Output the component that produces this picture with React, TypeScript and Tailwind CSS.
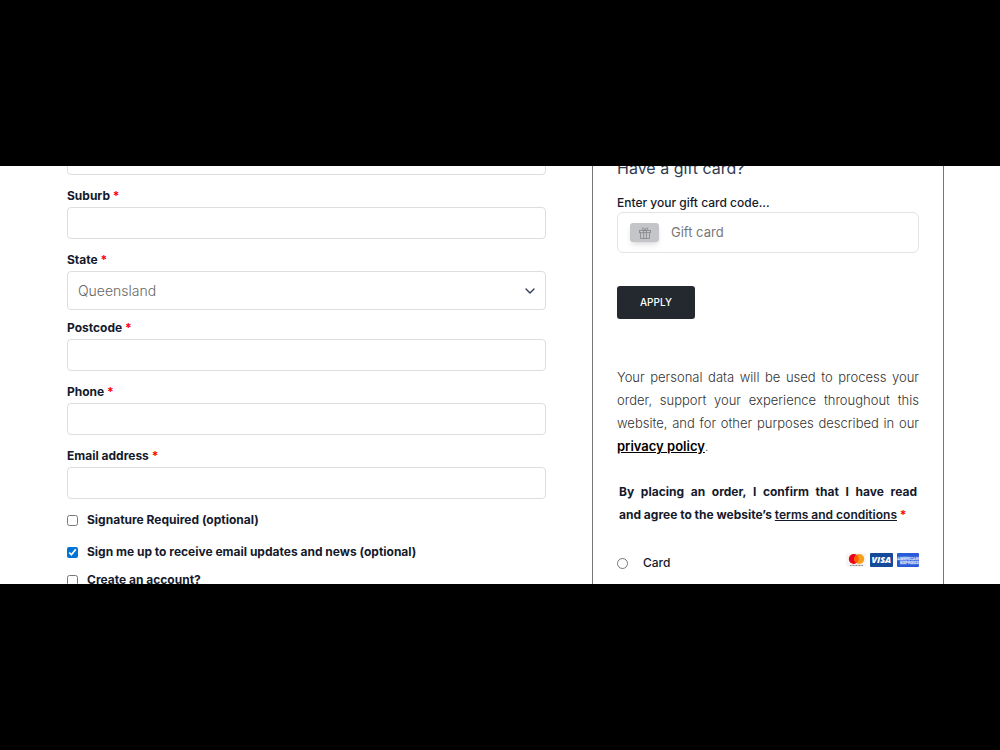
import { useState } from 'react';
import { ChevronDown } from 'lucide-react';

interface TextFieldProps {
  id: string;
  label: string;
  type?: string;
}

const inputClass =
  'block w-full h-8 px-2.5 text-sm bg-white border border-[#dddddd] rounded outline-none focus:border-[#999999]';

function RequiredMark() {
  return <span className="text-[#ff0000]">*</span>;
}

function TextField({ id, label, type = 'text' }: TextFieldProps) {
  return (
    <div className="pb-[11px]">
      <label htmlFor={id} className="block mb-px text-xs leading-5 font-bold">
        {label} <RequiredMark />
      </label>
      <input id={id} type={type} className={inputClass} />
    </div>
  );
}

interface CheckFieldProps {
  id: string;
  label: string;
  defaultChecked?: boolean;
}

function CheckField({ id, label, defaultChecked }: CheckFieldProps) {
  return (
    <div className="flex items-center gap-[9px]">
      <input id={id} type="checkbox" defaultChecked={defaultChecked} className="w-[11px] h-[11px] accent-[#0075d8]" />
      <label htmlFor={id} className="text-xs leading-5 font-bold">{label}</label>
    </div>
  );
}

function GiftIcon() {
  return (
    <svg viewBox="0 0 12 12" className="w-3 h-3" fill="none" stroke="#85868a" strokeWidth="0.8" aria-hidden="true">
      <rect x="0.5" y="3.5" width="11" height="2.2" />
      <path d="M1.5 5.7v5.8h9V5.7M4.6 3.5v8M7.4 3.5v8" />
      <path d="M6 3.5C4.5 3.5 3 2.8 3.2 1.6C3.4 0.4 5.4 0.4 6 3.5C6.6 0.4 8.6 0.4 8.8 1.6C9 2.8 7.5 3.5 6 3.5z" />
    </svg>
  );
}

function MastercardLogo() {
  return (
    <svg viewBox="0 0 20 14" className="w-5 h-3.5" role="img" aria-label="Mastercard">
      <rect width="20" height="14" rx="1" fill="#f6f6f6" />
      <circle cx="7.8" cy="6" r="5" fill="#eb001b" />
      <circle cx="13.2" cy="6" r="5" fill="#f79e1b" />
      <path d="M10.5 1.8a5 5 0 0 1 0 8.4a5 5 0 0 1 0-8.4z" fill="#ff5f00" />
      <path d="M4 12.4h13" stroke="#777777" strokeWidth="0.9" strokeDasharray="1.2 0.3" />
    </svg>
  );
}

function VisaLogo() {
  return (
    <svg viewBox="0 0 23 14" className="w-[23px] h-3.5" role="img" aria-label="Visa">
      <rect width="23" height="14" rx="1" fill="#15499a" />
      <text x="11.3" y="10.4" textAnchor="middle" fontSize="9" fontWeight="800" fontStyle="italic" fontFamily="Open Sans, sans-serif" fill="#ffffff">VISA</text>
    </svg>
  );
}

function AmexLogo() {
  return (
    <svg viewBox="0 0 22 14" className="w-[22px] h-3.5" role="img" aria-label="American Express">
      <rect width="22" height="14" rx="1" fill="#2a5bd7" />
      <g fill="#2a5bd7" stroke="#c3d2f7" strokeWidth="0.5" fontSize="4" fontWeight="700" fontFamily="Liberation Sans, sans-serif">
        <text x="0" y="6.6">AMERICAN</text>
        <text x="3" y="11">EXPRESS</text>
      </g>
    </svg>
  );
}

function BillingForm() {
  const [state, setState] = useState('Queensland');

  return (
    <section className="flex-1 min-w-0 -mt-[23px]">
      <div className="pb-[11px]">
        <input type="text" aria-label="Street address" className={inputClass} />
      </div>
      <TextField id="suburb" label="Suburb" />
      <div className="pb-2">
        <label htmlFor="state" className="block mb-px text-xs leading-5 font-bold">
          State <RequiredMark />
        </label>
        <div className="relative">
          <select
            id="state"
            value={state}
            onChange={(e) => setState(e.target.value)}
            className="block w-full h-[39px] px-2.5 text-sm font-light text-[#666666] bg-white border border-[#dddddd] rounded appearance-none outline-none"
          >
            <option>Queensland</option>
            <option>New South Wales</option>
            <option>Victoria</option>
          </select>
          <ChevronDown className="absolute right-2 top-3 w-4 h-4 text-[#2f3b52] pointer-events-none" />
        </div>
      </div>
      <TextField id="postcode" label="Postcode" />
      <TextField id="phone" label="Phone" type="tel" />
      <TextField id="email" label="Email address" type="email" />
      <div className="flex flex-col">
        <CheckField id="signature" label="Signature Required (optional)" />
        <div className="pt-3 pb-2">
          <CheckField id="newsletter" label="Sign me up to receive email updates and news (optional)" defaultChecked />
        </div>
        <CheckField id="account" label="Create an account?" />
      </div>
    </section>
  );
}

function OrderSummary() {
  return (
    <aside className="w-[352px] shrink-0 px-6 border-x border-[#777777]">
      <h3 className="-mt-2.5 mb-[13px] text-base leading-6 text-[#2f3b52]">Have a gift card?</h3>
      <label htmlFor="gift-card" className="block text-xs leading-[19px] font-medium">Enter your gift card code...</label>
      <div className="flex items-center gap-3 h-[41px] px-3 border border-[#e3e3e3] rounded-md">
        <span className="flex items-center justify-center w-[29px] h-[19px] rounded-[3px] bg-[#c4c5c8] shadow-md">
          <GiftIcon />
        </span>
        <input
          id="gift-card"
          type="text"
          placeholder="Gift card"
          className="flex-1 min-w-0 text-[13px] placeholder:text-[#777777] outline-none"
        />
      </div>
      <button type="button" className="block mt-[33px] w-[78px] h-[33px] rounded-[3px] bg-[#24282f] text-[10px] font-medium text-white">
        APPLY
      </button>
      <p className="mt-[47px] text-[13px] leading-[23px] font-light text-justify text-[#333333]">
        Your personal data will be used to process your order, support your experience throughout this website, and for other purposes described in our{' '}
        <a href="#privacy" className="font-semibold text-black underline">privacy policy</a>.
      </p>
      <p className="mt-[22px] mx-0.5 text-xs leading-[23px] font-bold text-justify">
        By placing an order, I confirm that I have read and&nbsp;agree to the website’s{' '}
        <a href="#terms" className="font-semibold underline">terms and conditions</a> <RequiredMark />
      </p>
      <div className="flex items-start justify-between mt-[27px]">
        <div className="flex items-center gap-[15px]">
          <input id="card" type="radio" name="payment" className="w-[11px] h-[11px]" />
          <label htmlFor="card" className="text-xs leading-5 font-medium">Card</label>
        </div>
        <div className="flex items-center gap-1">
          <MastercardLogo />
          <VisaLogo />
          <AmexLogo />
        </div>
      </div>
    </aside>
  );
}

export default function App() {
  return (
    <div className="h-screen py-[166px] bg-black font-[Inter,sans-serif] text-[#141a2b]">
      <main className="flex gap-[46px] h-full pl-[67px] pr-14 overflow-hidden bg-white">
        <BillingForm />
        <OrderSummary />
      </main>
    </div>
  );
}
